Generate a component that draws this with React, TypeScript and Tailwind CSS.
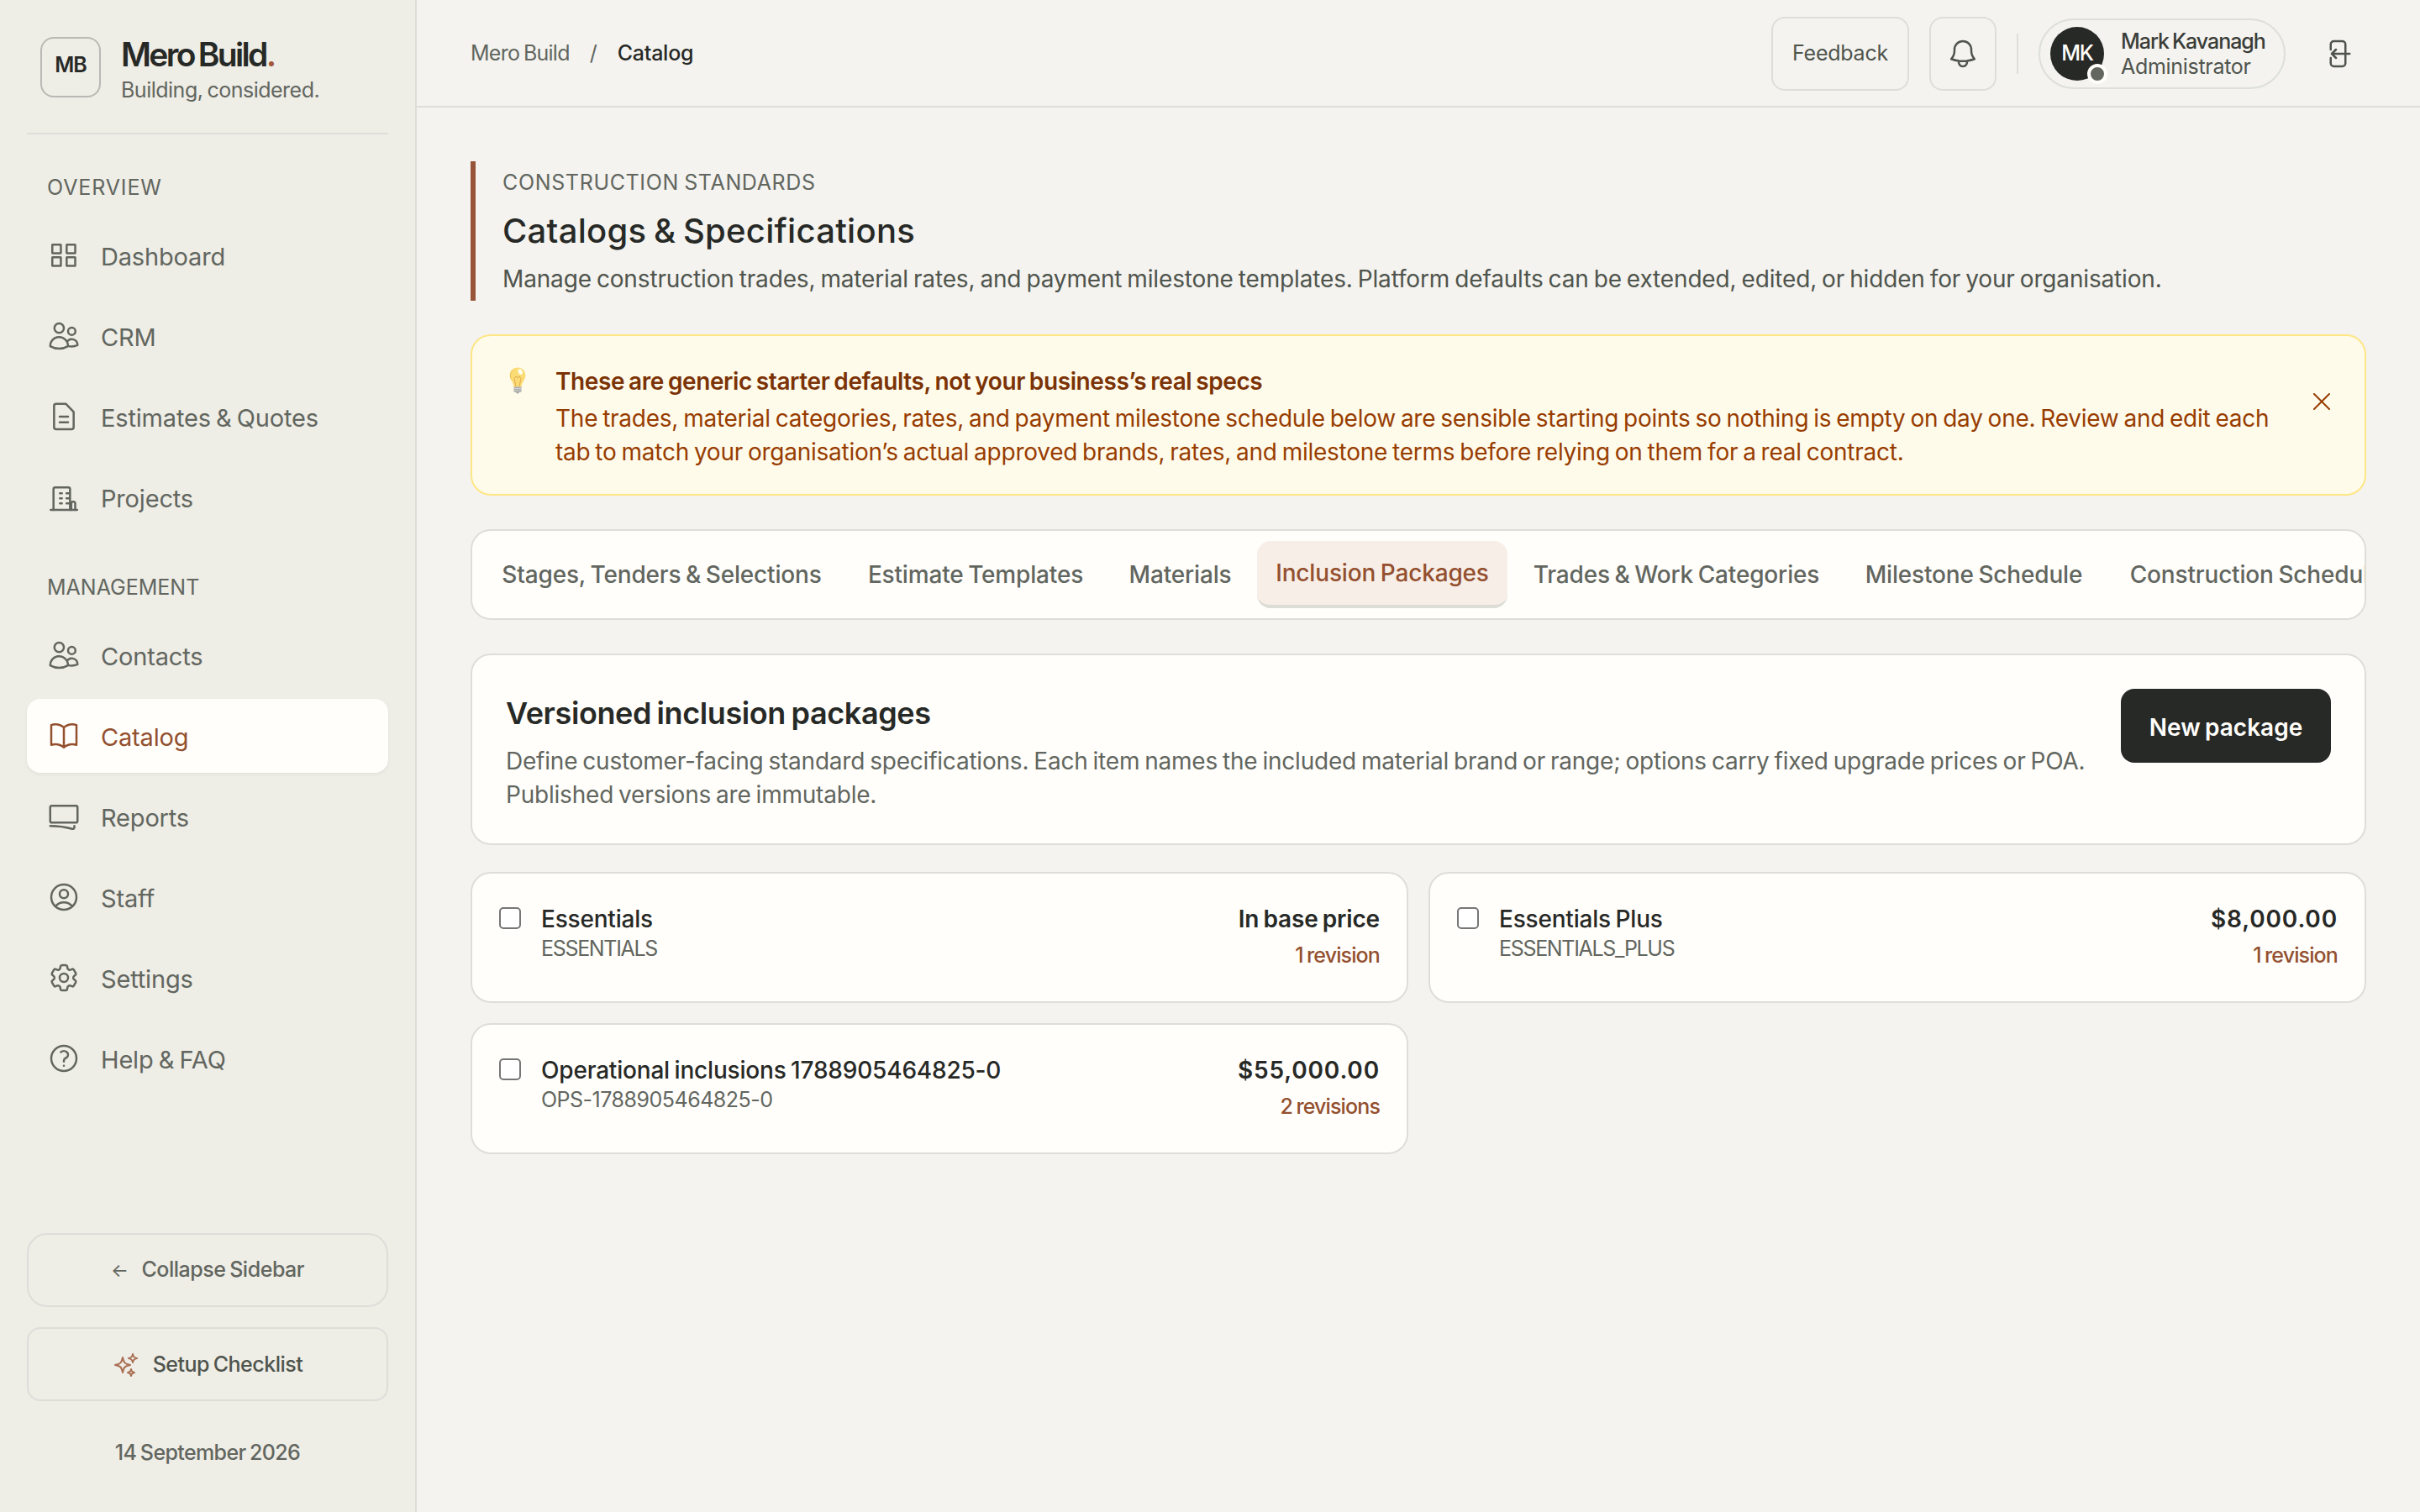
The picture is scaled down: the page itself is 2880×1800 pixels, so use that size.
import React from 'react';
import clsx from 'clsx';
import {
  HiOutlineBell,
  HiOutlineBookOpen,
  HiOutlineCog6Tooth,
  HiOutlineQuestionMarkCircle,
  HiOutlineSparkles,
  HiOutlineUserCircle,
  HiOutlineUsers,
} from 'react-icons/hi2';

const strokeProps = {
  viewBox: '0 0 24 24',
  fill: 'none',
  stroke: 'currentColor',
  strokeWidth: 1.5,
  strokeLinecap: 'round' as const,
  strokeLinejoin: 'round' as const,
};

type IconProps = { className?: string };

const GridIcon = ({ className }: IconProps) => (
  <svg {...strokeProps} className={className}>
    <rect x="3.75" y="4.35" width="6.1" height="6.1" rx="0.2" />
    <rect x="14" y="4.35" width="6.1" height="6.1" rx="0.2" />
    <rect x="3.75" y="13.4" width="6.1" height="6.1" rx="0.2" />
    <rect x="14" y="13.4" width="6.1" height="6.1" rx="0.2" />
  </svg>
);

const DocumentIcon = ({ className }: IconProps) => (
  <svg {...strokeProps} className={className}>
    <path d="M6.5 2.9h7L19 8.6v10.9a1.5 1.5 0 0 1-1.5 1.5h-11A1.5 1.5 0 0 1 5 19.5V4.4a1.5 1.5 0 0 1 1.5-1.5Z" />
    <path d="M9 12h6M9 16h6" />
  </svg>
);

const BuildingIcon = ({ className }: IconProps) => (
  <svg {...strokeProps} className={className}>
    <path d="M2.6 21h18.9" />
    <path d="M4.6 21V6.2A1.2 1.2 0 0 1 5.8 5h9.4a1.2 1.2 0 0 1 1.2 1.2V21" />
    <path d="M9.2 9.1h1.4M9.2 12.7h1.4M9.2 16.3h1.4M13.9 9.1h1.6M13.9 12.7h1.6M13.9 16.3h1.6" />
    <path d="M17.3 21v-4.6a1.2 1.2 0 0 1 1.2-1.2h.4a1.2 1.2 0 0 1 1.2 1.2V21" />
  </svg>
);

const ReportsIcon = ({ className }: IconProps) => (
  <svg {...strokeProps} className={className}>
    <rect x="2.25" y="4.4" width="19.5" height="12" rx="1.1" />
    <path d="M2.25 18.75a60.07 60.07 0 0 1 15.797 2.101c.727.198 1.453-.342 1.453-1.096V18.75" />
  </svg>
);

const SignOutIcon = ({ className }: IconProps) => (
  <svg {...strokeProps} className={className}>
    <path d="M8.25 9V5.25A2.25 2.25 0 0 1 10.5 3h6a2.25 2.25 0 0 1 2.25 2.25v13.5A2.25 2.25 0 0 1 16.5 21h-6a2.25 2.25 0 0 1-2.25-2.25V15M12 9l-3 3m0 0 3 3m-3-3h12.75" />
  </svg>
);

const BulbIcon = ({ className }: IconProps) => (
  <svg viewBox="0 0 20 32" fill="none" className={className}>
    <path d="M10 .5C4.6.5.6 4.6.6 9.8c0 3.4 1.6 5.5 3 7.9 1.1 1.9 1.5 3.5 1.7 5.8h9.4c.2-2.3.6-3.9 1.7-5.8 1.4-2.4 3-4.5 3-7.9C19.4 4.6 15.4.5 10 .5Z" fill="#fbdc74" />
    <path d="M3.4 4.500C1.5 7 .8 10.5 2.2 13.8" stroke="#d9a94a" strokeDasharray="1.5 1.5" />
    <path d="M8 23 6 13.5l2.2-2.6L10 13l2-2.1 2 2.6L12 23" stroke="#dca550" strokeWidth="0.9" />
    <ellipse cx="13.2" cy="5.6" rx="2.4" ry="3.4" transform="rotate(-28 13.2 5.6)" fill="#fffdf2" />
    <path d="M5.5 23.5h9v5A1.5 1.5 0 0 1 13 30h-1l-1 1.5H9L8 30H7a1.5 1.5 0 0 1-1.5-1.5v-5Z" fill="#a9abab" />
    <path d="M5.5 25.5h9M5.5 28h9" stroke="#d9dada" strokeWidth="0.9" />
  </svg>
);

const overview = [
  { label: 'Dashboard', icon: GridIcon },
  { label: 'CRM', icon: HiOutlineUsers },
  { label: 'Estimates & Quotes', icon: DocumentIcon },
  { label: 'Projects', icon: BuildingIcon },
];

const management = [
  { label: 'Contacts', icon: HiOutlineUsers },
  { label: 'Catalog', icon: HiOutlineBookOpen, active: true },
  { label: 'Reports', icon: ReportsIcon },
  { label: 'Staff', icon: HiOutlineUserCircle },
  { label: 'Settings', icon: HiOutlineCog6Tooth },
  { label: 'Help & FAQ', icon: HiOutlineQuestionMarkCircle },
];

const tabs = [
  { label: 'Stages, Tenders & Selections', width: 'w-[427px]' },
  { label: 'Estimate Templates', width: 'w-[304px]' },
  { label: 'Materials', width: 'w-[167px]' },
  { label: 'Inclusion Packages', width: 'w-[298px]', active: true },
  { label: 'Trades & Work Categories', width: 'w-[386px]' },
  { label: 'Milestone Schedule', width: 'w-[306px]' },
  { label: 'Construction Schedule', width: 'w-[350px]' },
];

const packages = [
  { name: 'Essentials', code: 'ESSENTIALS', price: 'In base price', revisions: '1 revision' },
  { name: 'Essentials Plus', code: 'ESSENTIALS_PLUS', price: '$8,000.00', revisions: '1 revision' },
  { name: 'Operational inclusions 1788905464825-0', code: 'OPS-1788905464825-0', price: '$55,000.00', revisions: '2 revisions' },
];

type NavItem = {
  label: string;
  icon: React.ComponentType<IconProps>;
  active?: boolean;
};

const NavSection: React.FC<{ title: string; titleClass: string; items: NavItem[] }> = ({ title, titleClass, items }) => (
  <div className="pt-[45px]">
    <h2 className={clsx('mb-[19px] pl-6 text-[25px] leading-9', titleClass)}>{title}</h2>
    <nav className="flex flex-col gap-2">
      {items.map(({ label, icon: Icon, active }) => (
        <a
          key={label}
          className={clsx(
            'flex h-[88px] items-center gap-6 rounded-2xl px-6 text-[29px] tracking-[-0.006em]',
            active && 'bg-[#fffefb] text-[#93502f] shadow-[0_2px_4px_rgba(39,41,38,0.06)]'
          )}
        >
          <Icon className="size-10" />
          <span className="pt-1">{label}</span>
        </a>
      ))}
    </nav>
  </div>
);

const Sidebar: React.FC = () => (
  <aside className="flex w-[496px] shrink-0 flex-col border-r-2 border-[#dddeda] bg-[#eeede6] px-8 text-[#62665f]">
    <div className="flex h-40 shrink-0 items-start gap-6 border-b-2 border-[#dddeda] pt-11 pl-4">
      <div className="flex size-[72px] items-center justify-center rounded-2xl border-2 border-[#b9bab5] pb-1 text-[25px] font-semibold tracking-[-0.04em] text-[#272926]">
        MB
      </div>
      <div className="-mt-px whitespace-nowrap">
        <p className="text-[39px] leading-[44px] font-semibold tracking-[-0.068em] text-[#272926]">
          Mero Build<span className="text-[#a2583a]">.</span>
        </p>
        <p className="text-[25px] leading-[41px] tracking-[-0.02em]">Building, considered.</p>
      </div>
    </div>

    <NavSection title="OVERVIEW" titleClass="tracking-[0.035em]" items={overview} />
    <NavSection title="MANAGEMENT" titleClass="tracking-[0em]" items={management} />

    <div className="mt-auto flex flex-col text-[25px] font-medium">
      <button className="flex h-[88px] items-center justify-center gap-4 rounded-3xl border-2 border-[#dddeda] tracking-[-0.019em]">
        <span className="text-[22px] font-normal">←</span>
        <span>Collapse Sidebar</span>
      </button>
      <button className="mt-6 flex h-[88px] items-center justify-center gap-4 rounded-2xl border-2 border-[#dddeda] pt-px font-[450] tracking-[-0.02em] text-[#4f544d]">
        <HiOutlineSparkles className="size-8 text-[#aa6e53]" />
        Setup Checklist
      </button>
      <p className="mt-[43px] mb-[53px] text-center leading-9 tracking-[-0.025em]">14 September 2026</p>
    </div>
  </aside>
);

const Header: React.FC = () => (
  <header className="flex h-32 shrink-0 items-center justify-between border-b-2 border-[#dddeda] pt-0.5 pr-20 pl-16 text-[25px] text-[#62665f]">
    <div className="flex items-center gap-6 whitespace-nowrap">
      <span className="tracking-[-0.03em]">Mero Build</span>
      <span>/</span>
      <span className="font-[450] tracking-[-0.01em] text-[#272926]">Catalog</span>
    </div>

    <div className="flex items-center whitespace-nowrap">
      <button className="flex h-[88px] w-[164px] items-center justify-center rounded-2xl border-2 border-[#dddeda] tracking-[-0.01em] text-[#4f544d]">
        Feedback
      </button>
      <button className="ml-6 flex h-[88px] w-20 items-center justify-center rounded-2xl border-2 border-[#dddeda] text-[#4f544d]">
        <HiOutlineBell className="size-10" />
      </button>
      <div className="mx-6 h-12 w-0.5 bg-[#dddeda]" />
      <div className="flex h-[84px] w-[294px] items-center rounded-full border-2 border-[#dddfd9] pl-3">
        <div className="relative flex size-16 items-center justify-center rounded-full bg-[#272926] text-[25px] font-medium tracking-[-0.05em] text-[#fffefb]">
          MK
          <span className="absolute -right-1 -bottom-1 size-6 rounded-full border-4 border-[#fffefb] bg-[#62665f]" />
        </div>
        <div className="ml-5 leading-[30px]">
          <p className="font-[450] tracking-[-0.042em] text-[#3a3d39]">Mark Kavanagh</p>
          <p className="tracking-[-0.012em] text-[#4f544d]">Administrator</p>
        </div>
      </div>
      <SignOutIcon className="ml-10 size-10 text-[#4f544d]" />
    </div>
  </header>
);

const PackageCard: React.FC<(typeof packages)[number]> = ({ name, code, price, revisions }) => (
  <div className="flex h-[156px] items-start rounded-3xl border-2 border-[#dddeda] bg-[#fffefb] px-8 pt-8 whitespace-nowrap">
    <span className="mt-2 size-[26px] shrink-0 rounded-[5px] border-2 border-[#767676] bg-white" />
    <div className="ml-6 flex-1">
      <p className="text-[28px] leading-[44px] font-[450] tracking-[-0.007em] text-[#272926]">{name}</p>
      <p className={clsx('text-[25px] leading-[27px] text-[#62665f]', code.startsWith('OPS') ? 'tracking-[-0.02em]' : 'tracking-[-0.053em]')}>
        {code}
      </p>
    </div>
    <div className="text-right">
      <p className={clsx('text-[28px] leading-[44px] font-semibold text-[#272926]', price.startsWith('$') ? 'tracking-[0.03em]' : 'tracking-[-0.006em]')}>
        {price}
      </p>
      <p className="text-[25px] leading-[43px] font-[450] tracking-[-0.035em] text-[#93502f]">{revisions}</p>
    </div>
  </div>
);

const App: React.FC = () => {
  return (
    <div className="flex h-[1800px] w-[2880px] overflow-hidden bg-[#f4f3ef] font-['Inter',sans-serif] [&_*]:[word-spacing:-0.06em]">
      <Sidebar />

      <div className="flex min-w-0 flex-1 flex-col">
        <Header />

        <main className="flex flex-col px-16 pt-16">
          {/* Page heading */}
          <div className="h-[166px] border-l-[6px] border-[#985438] pt-[7px] pl-8">
            <p className="text-[25px] leading-9 tracking-[0.026em] text-[#62665f]">CONSTRUCTION STANDARDS</p>
            <h1 className="mt-2.5 text-[40px] leading-[60px] font-[450] tracking-[0.007em] text-[#272926]">
              Catalogs &amp; Specifications
            </h1>
            <p className="mt-[7px] text-[28px] leading-10 tracking-[-0.0055em] whitespace-nowrap text-[#4f544d]">
              Manage construction trades, material rates, and payment milestone templates. Platform defaults can be extended, edited, or hidden for your organisation.
            </p>
          </div>

          {/* Starter defaults notice */}
          <div className="mt-10 flex h-48 items-start rounded-3xl border-2 border-amber-200 bg-amber-50 pr-[41px] pl-11">
            <BulbIcon className="mt-[37px] h-8 w-5 shrink-0" />
            <div className="ml-[35px] flex-1 pt-9 text-[28px]">
              <p className="leading-9 font-semibold tracking-[-0.0145em] text-amber-900">
                These are generic starter defaults, not your business’s real specs
              </p>
              <p className="mt-1.5 leading-10 tracking-[-0.0088em] text-amber-800">
                The trades, material categories, rates, and payment milestone schedule below are sensible starting points so nothing is empty on day one. Review and edit each tab to match your organisation’s actual approved brands, rates, and milestone terms before relying on them for a real contract.
              </p>
            </div>
            <svg viewBox="0 0 20 20" className="mt-[68px] ml-10 size-5 shrink-0 text-amber-800" stroke="currentColor" strokeWidth="2" strokeLinecap="round">
              <path d="M1 1l18 18M19 1L1 19" />
            </svg>
          </div>

          {/* Tabs */}
          <div className="mt-10 flex h-[108px] items-center gap-2 overflow-hidden rounded-3xl border-2 border-[#dddeda] bg-[#fffefb] px-3">
            {tabs.map((tab) => (
              <button
                key={tab.label}
                className={clsx(
                  'flex h-20 shrink-0 items-center justify-center rounded-2xl text-[28px] font-[450] tracking-[-0.006em] whitespace-nowrap',
                  tab.width,
                  tab.active ? 'border-b-4 border-[#dcddd6] bg-[#f7eee7] text-[#93502f]' : 'text-[#62665f]'
                )}
              >
                {tab.label}
              </button>
            ))}
          </div>

          {/* Inclusion packages intro */}
          <div className="mt-10 flex h-[228px] items-start justify-between rounded-3xl border-2 border-[#dddeda] bg-[#fffefb] p-10">
            <div className="w-[1890px]">
              <h2 className="text-[36px] leading-[58px] font-semibold tracking-[-0.011em] text-[#272926]">
                Versioned inclusion packages
              </h2>
              <p className="mt-2 text-[28px] leading-10 tracking-[-0.0075em] text-[#62665f]">
                Define customer-facing standard specifications. Each item names the included material brand or range; options carry fixed upgrade prices or POA. Published versions are immutable.
              </p>
            </div>
            <button className="flex h-[88px] w-[250px] items-center justify-center rounded-2xl bg-[#272926] pt-1 text-[28px] font-semibold text-[#fffefb]">
              New package
            </button>
          </div>

          <div className="mt-8 grid grid-cols-2 gap-6">
            {packages.map((item) => (
              <PackageCard key={item.code} {...item} />
            ))}
          </div>
        </main>
      </div>
    </div>
  );
};

export default App;
